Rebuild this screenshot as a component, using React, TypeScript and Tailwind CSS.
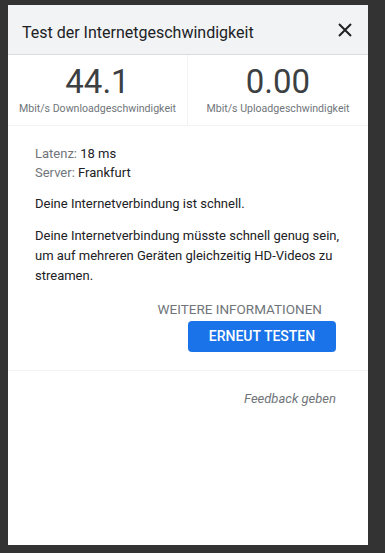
import React from "react";

const App: React.FC = () => {
  return (
    <div
      className="min-h-[553px] w-[385px] bg-[#333333] pt-[5px] pl-2"
      style={{ fontFamily: 'Roboto, "Liberation Sans", Arial, sans-serif' }}
    >
      <div className="w-[360px] h-[540px] bg-white flex flex-col">
        {/* Header */}
        <div className="h-[50px] bg-[#f1f3f4] border-b border-[#dadce0] flex items-center justify-between pl-[14px] pr-[16px] shrink-0">
          <span className="text-[16px] text-[#202124] pt-[7px]">
            Test der Internetgeschwindigkeit
          </span>
          <button className="text-[#202124]" title="Schließen">
            <svg width="14" height="14" viewBox="0 0 14 14">
              <path
                d="M1 1L13 13M13 1L1 13"
                stroke="currentColor"
                strokeWidth="2"
              />
            </svg>
          </button>
        </div>

        {/* Speeds */}
        <div className="grid grid-cols-2 h-[71px] border-b border-[#f1f3f4] shrink-0">
          <div className="flex flex-col items-center border-r border-[#f1f3f4] pt-[10px]">
            <span className="text-[33px] leading-[33px] text-[#3c4043]">44.1</span>
            <span className="text-[10.6px] text-[#70757a] mt-[3px]">
              Mbit/s Downloadgeschwindigkeit
            </span>
          </div>
          <div className="flex flex-col items-center pt-[10px]">
            <span className="text-[33px] leading-[33px] text-[#3c4043]">0.00</span>
            <span className="text-[10.6px] text-[#70757a] mt-[3px]">
              Mbit/s Uploadgeschwindigkeit
            </span>
          </div>
        </div>

        {/* Details */}
        <div className="px-[27px] pt-[18px] text-[13px] text-[#202124]">
          <div className="leading-[19px]">
            <div>
              <span className="text-[#70757a]">Latenz: </span>18 ms
            </div>
            <div>
              <span className="text-[#70757a]">Server: </span>Frankfurt
            </div>
          </div>
          <p className="mt-[12px] leading-[20px]">Deine Internetverbindung ist schnell.</p>
          <p className="mt-[12px] leading-[20px]">
            Deine Internetverbindung müsste schnell genug sein, um auf mehreren
            Geräten gleichzeitig HD-Videos zu streamen.
          </p>
        </div>

        {/* Actions */}
        <div className="flex flex-col items-end pr-[32px] pt-[13px] pb-[18px] border-b border-[#f1f3f4]">
          <span className="text-[13.5px] text-[#70757a] mr-[14px]">WEITERE INFORMATIONEN</span>
          <button className="mt-[2px] w-[148px] h-[31px] rounded bg-[#1a73e8] text-white text-[14px] font-medium">
            ERNEUT TESTEN
          </button>
        </div>

        <div className="flex justify-end pr-[32px] pt-[18px]">
          <span className="text-[13px] italic text-[#70757a]">Feedback geben</span>
        </div>
      </div>
    </div>
  );
};

export default App;
